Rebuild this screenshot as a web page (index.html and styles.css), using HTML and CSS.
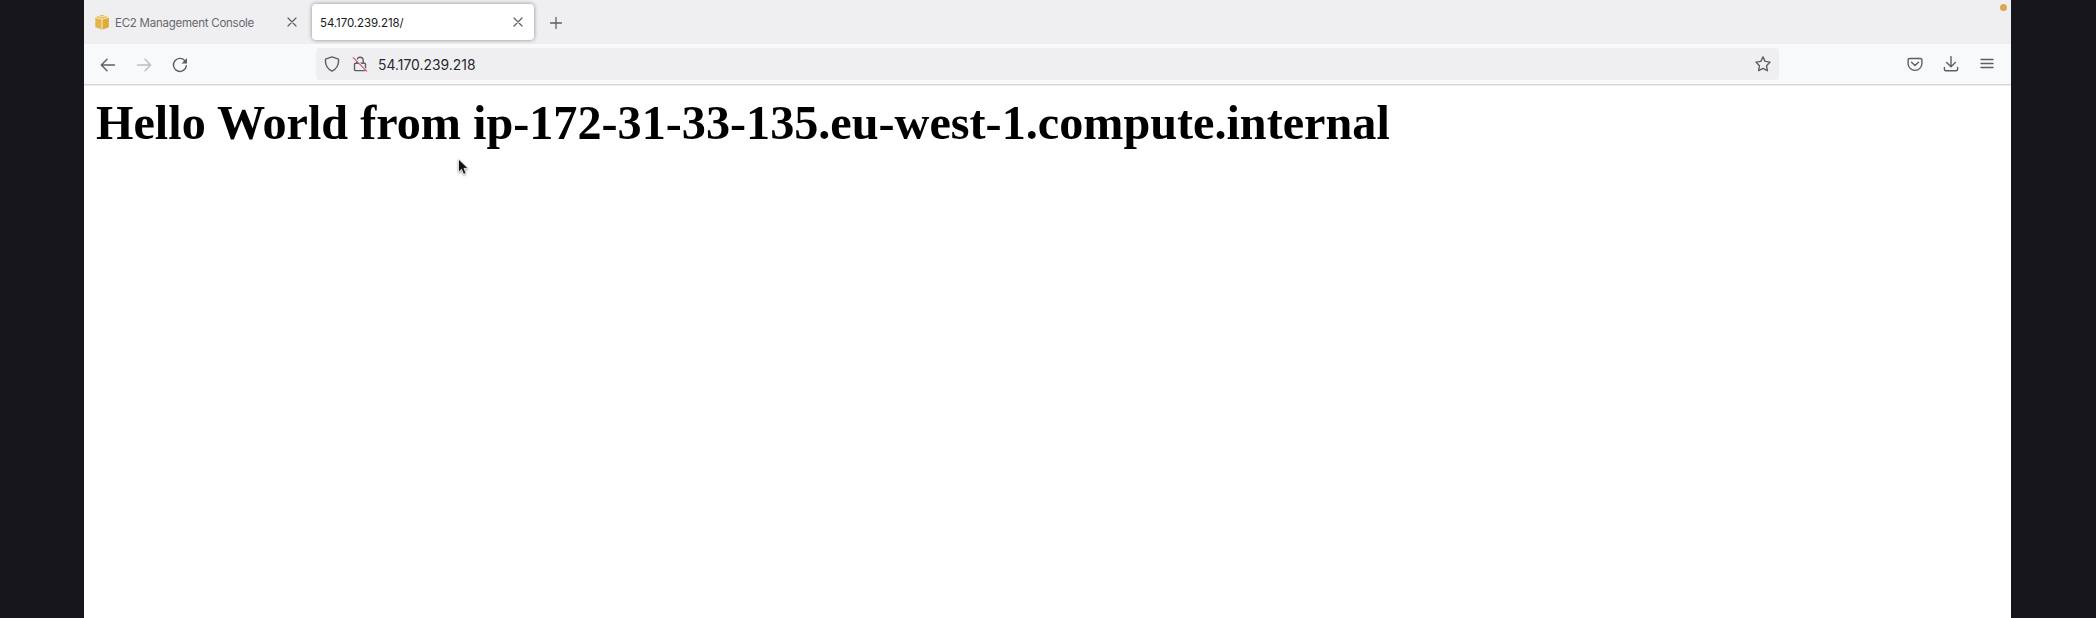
FILE: index.html
```html
<!DOCTYPE html>
<html lang="en">
<head>
<meta charset="utf-8">
<title>54.170.239.218/</title>
<link rel="stylesheet" href="styles.css">
</head>
<body>
<div class="window">
  <header class="tabs">
    <div class="tab">
      <svg class="favicon" width="16" height="16" viewBox="0 0 16 16"><path fill="#e3b54c" d="M1.300 3.200 8 .8l6.700 2.400v10L8 15.400 1.300 13.200z"/><path fill="#dcac40" d="M8 5.200 14.700 3.200v10L8 15.400z"/><path fill="none" stroke="#f8e8bb" stroke-width="1.100" d="M1.300 3.300 8 5.300l6.700-2M8 5.300v10M4.600 2l3.400 1 3.400-1"/></svg>
      <span class="tab-title">EC2 Management Console</span>
      <svg class="icon close" width="16" height="16" viewBox="0 0 16 16"><path d="m4 4 8 8m0-8-8 8"/></svg>
    </div>
    <div class="tab active">
      <span class="tab-title">54.170.239.218/</span>
      <svg class="icon close" width="16" height="16" viewBox="0 0 16 16"><path d="m4 4 8 8m0-8-8 8"/></svg>
    </div>
    <svg class="icon plus" width="16" height="16" viewBox="0 0 16 16"><path d="M8 2.500v11M2.500 8h11"/></svg>
    <span class="dot"></span>
  </header>
  <nav class="toolbar">
    <div class="nav-buttons">
      <svg class="icon" width="16" height="16" viewBox="0 0 16 16"><path d="M14.500 8H1.500M7 2.300 1.300 8 7 13.700"/></svg>
      <svg class="icon disabled" width="16" height="16" viewBox="0 0 16 16"><path d="M1.500 8h13M9 2.300 14.700 8 9 13.700"/></svg>
      <svg class="icon" width="16" height="16" viewBox="0 0 16 16"><path d="M12.800 3.600A6.500 6.500 0 1 0 14.400 8.600"/><path class="solid" d="M15 1v5.500H9.500z"/></svg>
    </div>
    <div class="urlbar">
      <svg class="icon" width="16" height="16" viewBox="0 0 16 16"><path d="M8 .9 14.500 3.200C15 8.500 12.400 13 8 15.200 3.600 13 1 8.500 1.500 3.200z"/></svg>
      <svg class="icon lock" width="16" height="16" viewBox="0 0 16 16"><path d="M4.800 7.200V4.500a3.200 3.200 0 0 1 6.400 0v2.700M3.500 7.200h9q1 0 1 1v5.400q0 1-1 1h-9q-1 0-1-1V8.200q0-1 1-1z"/><path class="gap" d="m2 1.300 13 13.500"/><path class="slash" d="m1.200 1.600 13.500 13.600"/></svg>
      <span class="address">54.170.239.218</span>
      <svg class="icon star" width="16" height="16" viewBox="0 0 16 16"><path d="m8 .9 2.100 4.500 5 .7-3.600 3.600.9 5L8 12.300l-4.400 2.400.9-5L.9 6.100l5-.7z"/></svg>
    </div>
    <div class="actions">
      <svg class="icon" width="16" height="16" viewBox="0 0 16 16"><path d="M2.600 2.500h10.800q1.500 0 1.500 1.500v3.500a6.900 6.900 0 0 1-13.800 0V4q0-1.500 1.500-1.500zM4.500 6.300 8 9.600l3.500-3.300"/></svg>
      <svg class="icon" width="16" height="16" viewBox="0 0 16 16"><path d="M8 .6v10M3.700 6.500 8 10.800l4.300-4.300M1.400 11.500v1.700q0 1.500 1.500 1.500h10.200q1.500 0 1.500-1.500v-1.700"/></svg>
      <svg class="icon" width="16" height="16" viewBox="0 0 16 16"><path d="M2 3.500h12M2 7.500h12M2 11.500h12"/></svg>
    </div>
  </nav>
  <main class="page">
    <h1>Hello World from ip-172-31-33-135.eu-west-1.compute.internal</h1>
  </main>
</div>
<svg class="cursor" width="14" height="20" viewBox="0 0 14 20"><path d="M1.500 1v13.200l3-2.900 2.100 5 2.500-1L7 10.400h4.200z"/></svg>
</body>
</html>
```
FILE: styles.css
```css
* { box-sizing: border-box; }
body {
  margin: 0;
  padding: 0 85px 0 84px;
  height: 618px;
  overflow: hidden;
  background: #17161c;
  font-family: Inter, "Liberation Sans", sans-serif;
}
.window {
  display: flex;
  flex-direction: column;
  height: 100%;
  background: #fff;
}
.tabs {
  display: flex;
  height: 44px;
  padding: 4px 4px 4px 3px;
  background: #efeff2;
}
.tab {
  display: flex;
  align-items: center;
  width: 225px;
  height: 36px;
  padding: 0 12px 0 7px;
  color: #67676c;
  font-size: 11.5px;
  letter-spacing: -.25px;
}
.tab.active {
  width: 222px;
  padding: 0 8px;
  border-radius: 4px;
  background: #fff;
  color: #18181c;
  letter-spacing: -.08px;
  box-shadow: 0 0 4px rgba(0, 0, 0, .42);
}
.favicon { margin-right: 5px; }
.tab-title {
  padding-top: 1px;
  white-space: nowrap;
}
.icon {
  flex: none;
  fill: none;
  stroke: #5e5e66;
  stroke-width: 1.4;
  stroke-linejoin: round;
  stroke-linecap: round;
}
.close { margin-left: auto; stroke-width: 1.2; }
.plus { margin: 11px 0 0 13.5px; stroke-width: 1.3; }
.disabled { stroke: #bdbdc2; }
.solid { fill: #5e5e66; stroke: none; }
.dot {
  width: 7px;
  height: 7px;
  margin-left: auto;
  border-radius: 50%;
  background: #dfa651;
}
.toolbar {
  display: flex;
  align-items: center;
  height: 41px;
  padding: 0 16px;
  background: #f8f9fb;
  border-bottom: 1px solid #d4d5d8;
}
.nav-buttons, .actions { display: flex; gap: 20px; }
.nav-buttons { padding-top: 1px; }
.urlbar {
  display: flex;
  align-items: center;
  width: 1463px;
  height: 32px;
  margin-left: 128px;
  padding: 0 8px;
  border-radius: 4px;
  background: #efeff2;
}
.lock { margin-left: 12px; }
.gap { stroke: #efeff2; stroke-width: 1.5; }
.slash { stroke: #d35a79; stroke-width: 1.2; }
.address {
  margin-left: 10px;
  padding-top: 1px;
  color: #28282e;
  font-size: 13.9px;
}
.star { margin-left: auto; }
.actions { margin-left: auto; }
.page {
  flex: 1;
  padding: 8px 12px;
  border-top: 1px solid #ededef;
}
h1 {
  margin: 0;
  color: #000;
  font: bold 48.2px/58px "Liberation Serif", serif;
  white-space: nowrap;
}
.cursor {
  position: absolute;
  left: 457px;
  top: 158px;
  fill: #111;
  stroke: #fff;
  stroke-width: .8;
  filter: drop-shadow(0 1px 1px rgba(0, 0, 0, .4));
}
```
